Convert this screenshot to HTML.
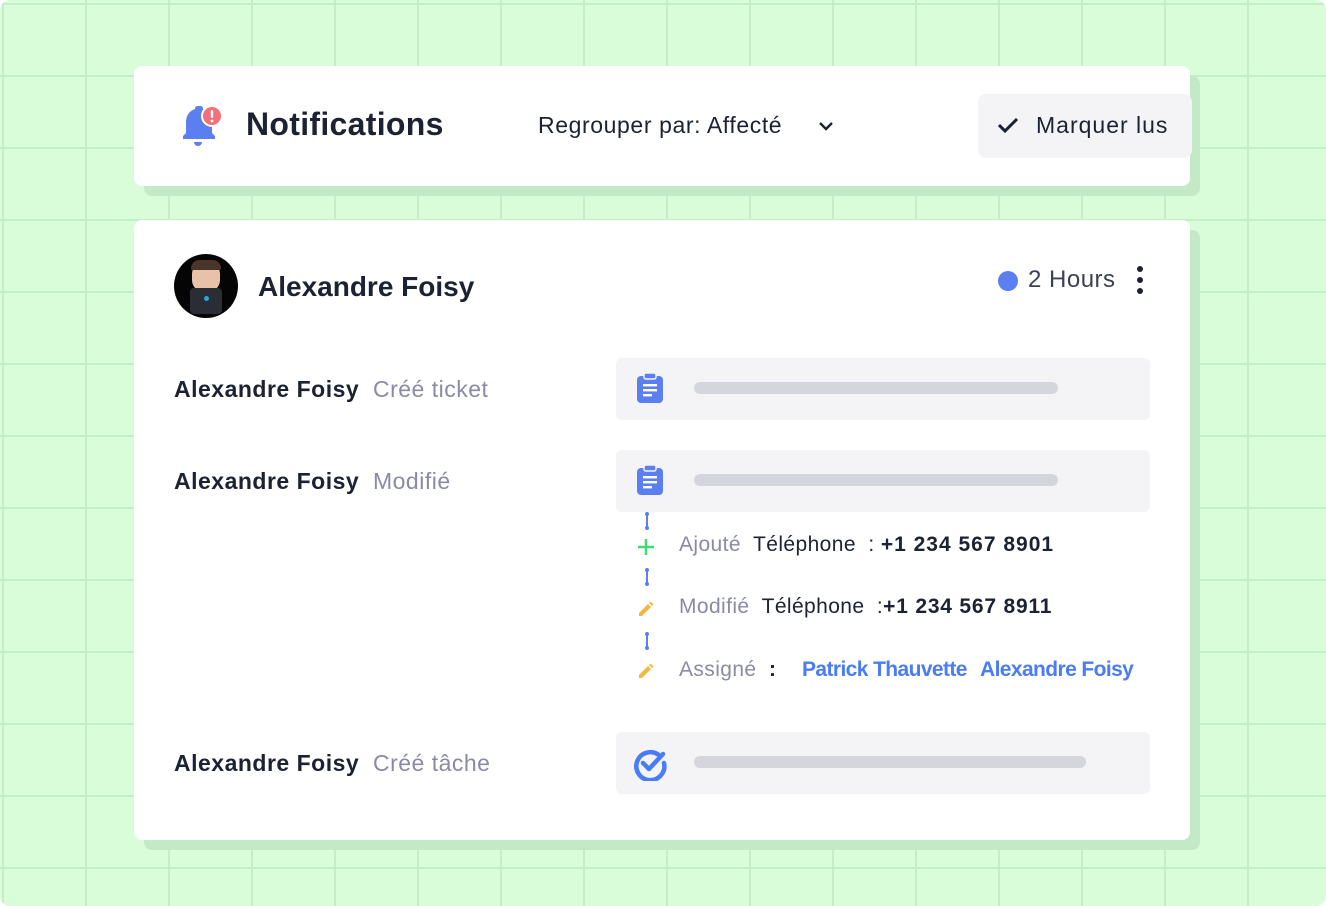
<!DOCTYPE html>
<html><head><meta charset="utf-8"><style>
*{margin:0;padding:0;box-sizing:border-box}
body{width:1326px;height:906px;overflow:hidden;font-family:"Liberation Sans",sans-serif;background:#fff;position:relative}
.bg{position:absolute;left:0;top:0;width:1326px;height:906px;border-radius:10px;background-color:#d8fdd8;
background-image:linear-gradient(90deg,#c6edc9 2px,transparent 2px),linear-gradient(#c6edc9 2px,transparent 2px);
background-size:83px 72px;background-position:2px 3px;}
.sh{position:absolute;background:#c4e9c6;border-radius:8px}
.card{position:absolute;background:#fff;border-radius:8px}
.t{position:absolute;white-space:nowrap}
.dark{color:#1c2233}
.grey{color:#8a8aa6}
.blue{color:#4a7cf6}
.box{position:absolute;left:616px;width:534px;height:62px;background:#f4f4f6;border-radius:6px}
.bar{position:absolute;left:78px;top:24px;height:12px;background:#d5d5dc;border-radius:6px}
.vl{position:absolute;left:646px;width:2px;background:#5b7ff0}
.vl:before,.vl:after{content:"";position:absolute;left:-1px;width:4px;height:4px;border-radius:2px;background:#5b7ff0}
.vl:before{top:-1px}.vl:after{bottom:-1px}
</style></head><body>
<div class="bg"></div>
<div class="sh" style="left:144px;top:76px;width:1056px;height:120px"></div>
<div class="card" style="left:134px;top:66px;width:1056px;height:120px"></div>
<svg style="position:absolute;left:178px;top:104px" width="46" height="44" viewBox="0 0 46 44">
<path d="M20 2c-2 0-3 1-3 3-6 2-9 7-9 13v11l-3 3v3h32v-3l-3-3V18c0-6-3-11-9-13 0-2-1-3-3-3z" fill="#5b7ff0"/>
<path d="M16 38h8a4 4 0 0 1-8 0z" fill="#5b7ff0"/>
<circle cx="34" cy="12" r="11" fill="#fff"/><circle cx="34" cy="12" r="9" fill="#f36f7a"/>
<rect x="32.8" y="6" width="2.4" height="8" rx="1.2" fill="#fff"/><circle cx="34" cy="17" r="1.4" fill="#fff"/>
</svg>
<div class="t dark" style="left:246px;top:106px;font-size:32px;font-weight:bold;letter-spacing:0.3px">Notifications</div>
<div class="t dark" style="left:538px;top:112px;font-size:23px;letter-spacing:0.6px">Regrouper par: Affecté</div>
<svg style="position:absolute;left:817px;top:119px" width="18" height="14"><path d="M3 4l6 6 6-6" stroke="#1c2233" stroke-width="2.4" fill="none"/></svg>
<div style="position:absolute;left:978px;top:94px;width:214px;height:64px;background:#f4f4f6;border-radius:8px"></div>
<svg style="position:absolute;left:996px;top:115px" width="24" height="20"><path d="M3 10l6 6 12-12" stroke="#1c2233" stroke-width="3" fill="none"/></svg>
<div class="t dark" style="left:1036px;top:112px;font-size:23px;letter-spacing:1px">Marquer lus</div>

<div class="sh" style="left:144px;top:230px;width:1056px;height:620px"></div>
<div class="card" style="left:134px;top:220px;width:1056px;height:620px"></div>
<div style="position:absolute;left:174px;top:254px;width:64px;height:64px;border-radius:50%;background:#050505;overflow:hidden">
<div style="position:absolute;left:18px;top:8px;width:28px;height:30px;border-radius:12px;background:#e8c2a8"></div>
<div style="position:absolute;left:17px;top:6px;width:30px;height:10px;border-radius:10px 10px 2px 2px;background:#4a3528"></div>
<div style="position:absolute;left:16px;top:34px;width:32px;height:26px;border-radius:4px;background:#2a2d33"></div>
<div style="position:absolute;left:30px;top:42px;width:5px;height:5px;border-radius:50%;background:#2aa8d8"></div>
</div>
<div class="t dark" style="left:258px;top:271px;font-size:28px;font-weight:bold">Alexandre Foisy</div>
<div style="position:absolute;left:998px;top:271px;width:20px;height:20px;border-radius:50%;background:#5b7ff0"></div>
<div class="t" style="left:1028px;top:266px;font-size:24px;color:#3c4155;letter-spacing:0.5px">2 Hours</div>
<svg style="position:absolute;left:1133px;top:265px" width="14" height="32"><circle cx="7" cy="4" r="3" fill="#1c2233"/><circle cx="7" cy="15" r="3" fill="#1c2233"/><circle cx="7" cy="26" r="3" fill="#1c2233"/></svg>

<div class="t" style="left:174px;top:376px;font-size:23px;letter-spacing:0.5px"><b class="dark">Alexandre Foisy</b>&nbsp; <span class="grey">Créé ticket</span></div>
<div class="t" style="left:174px;top:468px;font-size:23px;letter-spacing:0.5px"><b class="dark">Alexandre Foisy</b>&nbsp; <span class="grey">Modifié</span></div>
<div class="t" style="left:174px;top:750px;font-size:23px;letter-spacing:0.5px"><b class="dark">Alexandre Foisy</b>&nbsp; <span class="grey">Créé tâche</span></div>

<div class="box" style="top:358px"><div class="bar" style="width:364px"></div>
<svg style="position:absolute;left:20px;top:14px" width="28" height="32" viewBox="0 0 28 32"><rect x="1" y="4" width="26" height="27" rx="4" fill="#5b7ff0"/><rect x="8" y="1" width="12" height="6" rx="2" fill="#5b7ff0" stroke="#f4f4f6" stroke-width="1.5"/><rect x="7" y="12" width="14" height="2.4" fill="#fff"/><rect x="7" y="17" width="14" height="2.4" fill="#fff"/><rect x="7" y="22" width="9" height="2.4" fill="#fff"/></svg></div>
<div class="box" style="top:450px"><div class="bar" style="width:364px"></div>
<svg style="position:absolute;left:20px;top:14px" width="28" height="32" viewBox="0 0 28 32"><rect x="1" y="4" width="26" height="27" rx="4" fill="#5b7ff0"/><rect x="8" y="1" width="12" height="6" rx="2" fill="#5b7ff0" stroke="#f4f4f6" stroke-width="1.5"/><rect x="7" y="12" width="14" height="2.4" fill="#fff"/><rect x="7" y="17" width="14" height="2.4" fill="#fff"/><rect x="7" y="22" width="9" height="2.4" fill="#fff"/></svg></div>
<div class="box" style="top:732px"><div class="bar" style="width:392px"></div>
<svg style="position:absolute;left:16px;top:13px" width="36" height="36" viewBox="0 0 36 36"><path d="M28 11A14 14 0 1 0 32 18" stroke="#4a7cf6" stroke-width="4.5" fill="none" stroke-linecap="round"/><path d="M11 18l6 6 14-15" stroke="#4a7cf6" stroke-width="4.5" fill="none" stroke-linecap="round" stroke-linejoin="round"/></svg></div>

<div class="vl" style="top:513px;height:16px"></div>
<div class="vl" style="top:569px;height:16px"></div>
<div class="vl" style="top:633px;height:16px"></div>
<svg style="position:absolute;left:636px;top:537px" width="20" height="20"><path d="M10 2v16M2 10h16" stroke="#3ddc70" stroke-width="2.4"/></svg>
<svg style="position:absolute;left:637px;top:600px" width="18" height="18"><path d="M2 13L11 4l3 3-9 9H2z" fill="#f2b740"/><path d="M12 3l1.5-1.5 3 3L15 6z" fill="#f2b740"/></svg>
<svg style="position:absolute;left:637px;top:662px" width="18" height="18"><path d="M2 13L11 4l3 3-9 9H2z" fill="#f2b740"/><path d="M12 3l1.5-1.5 3 3L15 6z" fill="#f2b740"/></svg>
<div class="t" style="left:679px;top:533px;font-size:21px;letter-spacing:0.4px"><span class="grey">Ajouté</span>&nbsp; <span class="dark">Téléphone&nbsp; : <b style="letter-spacing:1px">+1 234 567 8901</b></span></div>
<div class="t" style="left:679px;top:595px;font-size:21px;letter-spacing:0.4px"><span class="grey">Modifié</span>&nbsp; <span class="dark">Téléphone&nbsp; :<b style="letter-spacing:0.8px">+1 234 567 8911</b></span></div>
<div class="t" style="left:679px;top:658px;font-size:21px;letter-spacing:0.4px"><span class="grey">Assigné</span>&nbsp; <b class="dark">:</b></div>
<div class="t blue" style="left:802px;top:658px;font-size:21px;font-weight:bold;letter-spacing:-0.6px">Patrick Thauvette</div>
<div class="t blue" style="left:980px;top:658px;font-size:21px;font-weight:bold;letter-spacing:-0.6px">Alexandre Foisy</div>
</body></html>
